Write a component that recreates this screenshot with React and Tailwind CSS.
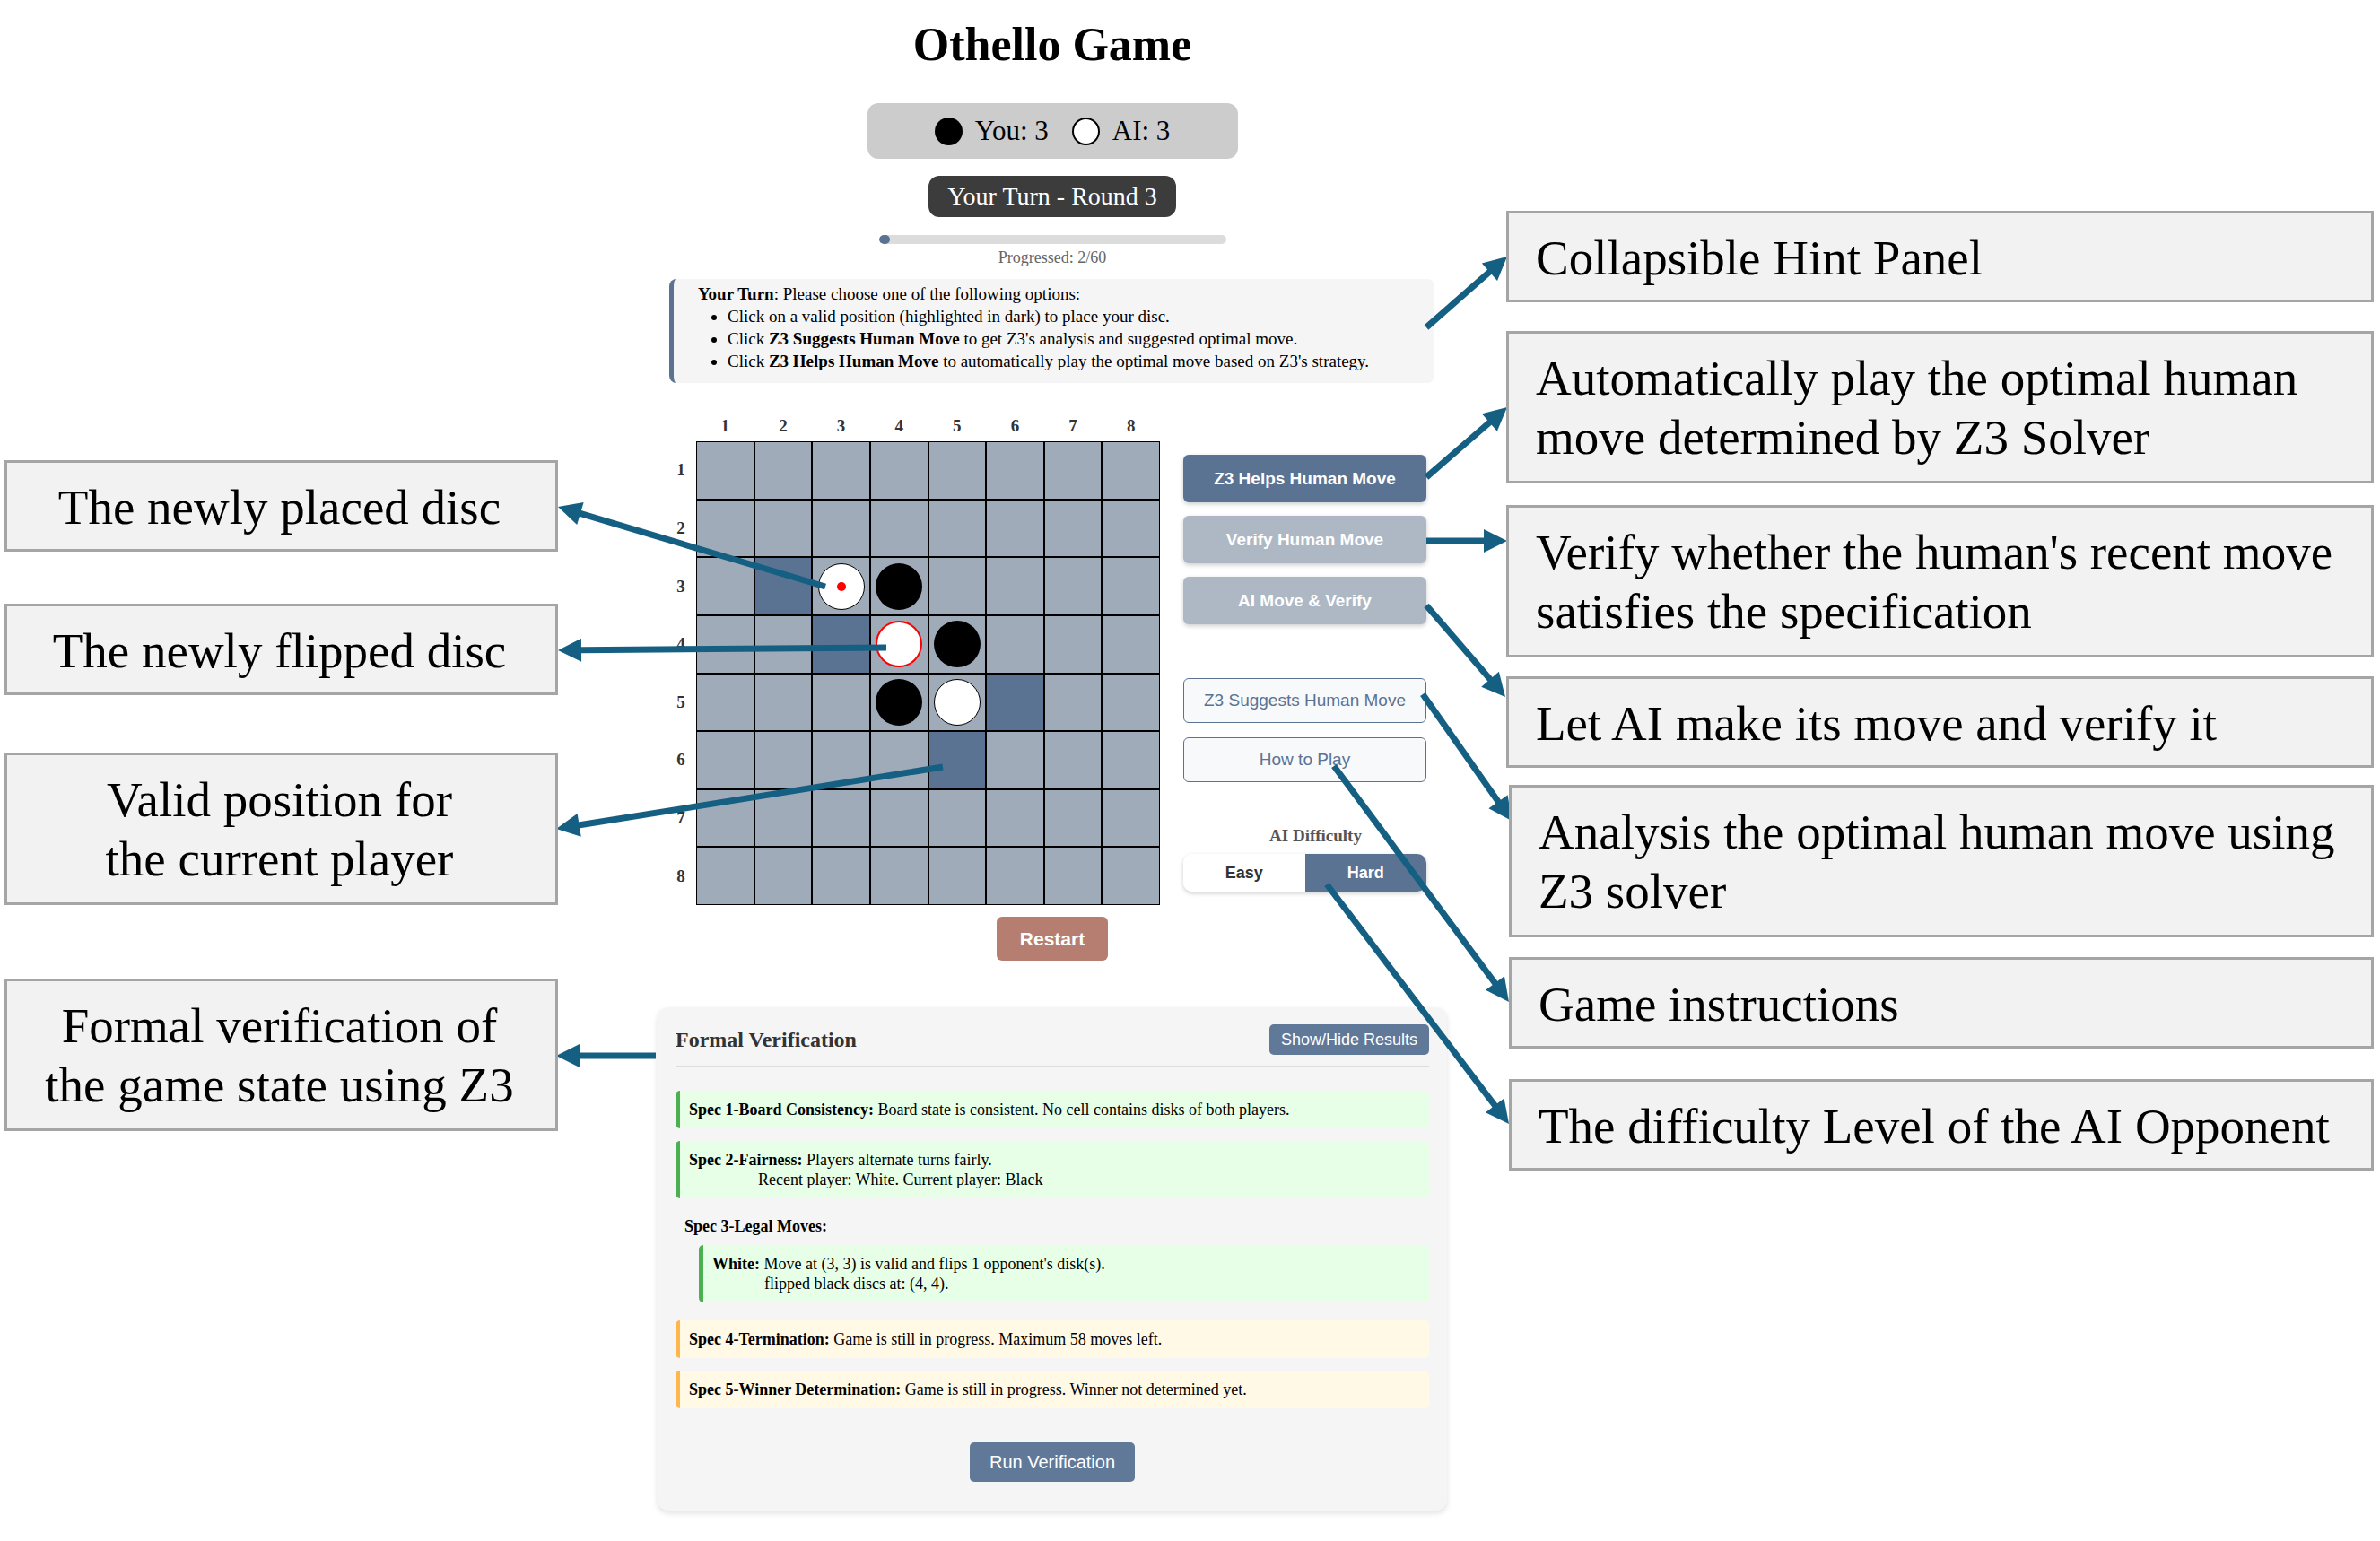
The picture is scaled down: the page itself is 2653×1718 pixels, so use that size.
const SERIF = "font-['Liberation_Serif',serif]";
const SANS = "font-['Liberation_Sans',sans-serif]";

const NUMBERS = [1, 2, 3, 4, 5, 6, 7, 8];

const DISCS = {
  "3-3": "placed",
  "3-4": "black",
  "4-4": "flipped",
  "4-5": "black",
  "5-4": "black",
  "5-5": "white",
};

const VALID = ["3-2", "4-3", "5-6", "6-5"];

const DISC_STYLE = {
  black: "bg-black",
  white: "bg-white border border-black",
  placed: "bg-white border border-black",
  flipped: "bg-white border-2 border-[#ff0000]",
};

const ARROWS = [
  [920, 654, 622, 565],
  [988, 722, 622, 725],
  [1051, 855, 620, 924],
  [731, 1177, 620, 1177],
  [1590, 365, 1680, 286],
  [1590, 532, 1680, 454],
  [1590, 603, 1680, 603],
  [1590, 675, 1678, 777],
  [1586, 774, 1685, 915],
  [1487, 854, 1682, 1117],
  [1479, 986, 1682, 1253],
];

function Arrow({ points }) {
  const [x1, y1, x2, y2] = points;
  const len = Math.hypot(x2 - x1, y2 - y1);
  const ux = (x2 - x1) / len;
  const uy = (y2 - y1) / len;
  const bx = x2 - ux * 26;
  const by = y2 - uy * 26;
  const head = [
    [x2, y2],
    [bx - uy * 13, by + ux * 13],
    [bx + uy * 13, by - ux * 13],
  ]
    .map((p) => p.join(","))
    .join(" ");
  return (
    <g>
      <line x1={x1} y1={y1} x2={bx + ux} y2={by + uy} stroke="#156082" strokeWidth="7" />
      <polygon points={head} fill="#156082" />
    </g>
  );
}

function Callout({ children, lines = 1, align = "left", className = "" }) {
  return (
    <div
      className={`relative z-10 border-3 border-[#a5a5a5] bg-[#f2f2f2] text-[55px] leading-[66px] text-black ${
        lines === 1 ? "pt-[17px] pb-[13px]" : "pt-[17px] pb-[15px]"
      } ${align === "center" ? "pr-1 text-center" : "pl-[30px]"} ${className}`}
    >
      {children}
    </div>
  );
}

function Cell({ row, col }) {
  const key = `${row}-${col}`;
  const disc = DISCS[key];
  return (
    <button
      type="button"
      aria-label={`Row ${row}, column ${col}`}
      className={`flex items-center justify-center ${VALID.includes(key) ? "bg-[#5b7393]" : "bg-[#a0abba]"}`}
    >
      {disc && (
        <span className={`flex size-[52px] items-center justify-center rounded-full ${DISC_STYLE[disc]}`}>
          {disc === "placed" && <span className="size-[10px] rounded-full bg-[#ff0000]" />}
        </span>
      )}
    </button>
  );
}

function Board() {
  return (
    <div className="grid flex-1 grid-cols-[34px_1fr]">
      <div className="col-start-2 mb-[5px] grid grid-cols-8 text-center text-[19px] leading-6 font-bold text-[#333333]">
        {NUMBERS.map((n) => (
          <span key={n}>{n}</span>
        ))}
      </div>
      <div className="grid grid-rows-8 items-center text-center text-[19px] leading-6 font-bold text-[#333333]">
        {NUMBERS.map((n) => (
          <span key={n}>{n}</span>
        ))}
      </div>
      <div className="grid aspect-square grid-cols-8 grid-rows-8 gap-[2px] bg-black p-px">
        {NUMBERS.map((row) => NUMBERS.map((col) => <Cell key={`${row}-${col}`} row={row} col={col} />))}
      </div>
    </div>
  );
}

function Controls() {
  const solid = "h-[53px] rounded-md pt-[2px] text-[19px] font-bold text-white shadow-[0_2px_5px_rgba(0,0,0,0.2)]";
  const outline = "h-[50px] rounded-md border border-[#5b7393] bg-[#f8f9fb] pt-px text-[19px] text-[#5b7393]";
  return (
    <div className={`flex w-[271px] flex-col pt-11 ${SANS}`}>
      <div className="flex flex-col gap-[15px]">
        <button type="button" className={`${solid} bg-[#5b7393]`}>Z3 Helps Human Move</button>
        <button type="button" className={`${solid} bg-[#aeb8c5]`}>Verify Human Move</button>
        <button type="button" className={`${solid} bg-[#aeb8c5]`}>AI Move &amp; Verify</button>
      </div>
      <div className="mt-[60px] flex flex-col gap-4">
        <button type="button" className={outline}>Z3 Suggests Human Move</button>
        <button type="button" className={outline}>How to Play</button>
      </div>
      <div className="mt-12">
        <div id="difficulty" className={`pl-6 text-center text-[19px] leading-6 font-bold text-[#555555] ${SERIF}`}>
          AI Difficulty
        </div>
        <div
          role="group"
          aria-labelledby="difficulty"
          className="mt-2 grid h-[42px] grid-cols-2 overflow-hidden rounded-[10px] text-[18px] font-bold shadow-[0_2px_5px_rgba(0,0,0,0.2)]"
        >
          <button type="button" aria-pressed="false" className="bg-white text-[#333333]">Easy</button>
          <button type="button" aria-pressed="true" className="bg-[#5b7393] text-white">Hard</button>
        </div>
      </div>
    </div>
  );
}

function Spec({ tone, title, children, className = "" }) {
  const colors = tone === "ok" ? "border-[#4caf50] bg-[#e6ffe6]" : "border-[#ffb74d] bg-[#fff9e6]";
  return (
    <div className={`rounded-[5px] border-l-5 py-[10px] pl-[10px] ${colors} ${className}`}>
      <strong>{title}</strong> {children}
    </div>
  );
}

function Verification() {
  return (
    <section className="mt-[52px] rounded-xl bg-[#f5f5f5] px-5 pt-[19px] pb-8 shadow-[0_3px_6px_rgba(0,0,0,0.12)]">
      <div className="flex items-center justify-between border-b-2 border-[#dddddd] pb-3">
        <h2 className="text-2xl font-bold text-[#333333]">Formal Verification</h2>
        <button type="button" className={`h-[34px] rounded-[5px] bg-[#617999] px-[13px] text-lg leading-6 text-white ${SANS}`}>
          Show/Hide Results
        </button>
      </div>
      <div className="mt-[26px] text-[18px] leading-[22px]">
        <Spec tone="ok" title="Spec 1-Board Consistency:">
          Board state is consistent. No cell contains disks of both players.
        </Spec>
        <Spec tone="ok" title="Spec 2-Fairness:" className="mt-[14px]">
          Players alternate turns fairly.
          <div className="pl-[77px]">Recent player: White. Current player: Black</div>
        </Spec>
        <div className="mt-5 mb-[10px] pl-[10px] font-bold">Spec 3-Legal Moves:</div>
        <Spec tone="ok" title="White:" className="ml-[26px]">
          Move at (3, 3) is valid and flips 1 opponent's disk(s).
          <div className="pl-[58px]">flipped black discs at: (4, 4).</div>
        </Spec>
        <Spec tone="wait" title="Spec 4-Termination:" className="mt-5">
          Game is still in progress. Maximum 58 moves left.
        </Spec>
        <Spec tone="wait" title="Spec 5-Winner Determination:" className="mt-[14px]">
          Game is still in progress. Winner not determined yet.
        </Spec>
      </div>
      <div className="mt-[38px] text-center">
        <button type="button" className={`h-11 rounded-[5px] bg-[#617999] px-[22px] text-xl text-white ${SANS}`}>
          Run Verification
        </button>
      </div>
    </section>
  );
}

function Game() {
  return (
    <main className="flex flex-col pt-5 pr-[66px] pl-[111px] text-black">
      <h1 className="text-center text-[52px] leading-[60px] font-bold">Othello Game</h1>
      <div className="mt-[35px] flex h-[62px] w-[413px] items-center justify-center self-center rounded-xl bg-[#cccccc] text-[31px]">
        <span className="mr-[14px] size-[31px] rounded-full bg-black" />
        <span>You: 3</span>
        <span className="mr-[14px] ml-[26px] size-[31px] rounded-full border-2 border-black bg-white" />
        <span>AI: 3</span>
      </div>
      <div className="mt-[19px] flex h-[46px] items-center self-center rounded-xl bg-[#3c3c3c] px-[21px] text-[28px] text-white">
        Your Turn - Round 3
      </div>
      <div
        role="progressbar"
        aria-label="Progress"
        aria-valuenow={2}
        aria-valuemax={60}
        className="mt-5 h-[10px] w-[387px] self-center overflow-hidden rounded-full bg-[#dcdcdc]"
      >
        <div className="h-full rounded-full bg-[#5b7393]" style={{ width: `${(2 / 60) * 100}%` }} />
      </div>
      <div className="mt-[3px] text-center text-[18px] leading-6 text-[#666666]">Progressed: 2/60</div>
      <div className="mt-3 mr-[14px] ml-[13px] rounded-lg border-l-5 border-[#5b7393] bg-[#f5f5f5] pt-1 pb-3 pl-[27px] text-[19px] leading-[25px]">
        <p>
          <strong>Your Turn</strong>: Please choose one of the following options:
        </p>
        <ul className="list-disc pl-[33px]">
          <li>Click on a valid position (highlighted in dark) to place your disc.</li>
          <li>
            Click <strong>Z3 Suggests Human Move</strong> to get Z3's analysis and suggested optimal move.
          </li>
          <li>
            Click <strong>Z3 Helps Human Move</strong> to automatically play the optimal move based on Z3's strategy.
          </li>
        </ul>
      </div>
      <div className="mt-9 flex gap-[26px] pr-[23px] pl-[9px]">
        <Board />
        <Controls />
      </div>
      <button
        type="button"
        className={`mt-[13px] h-[49px] self-center rounded-md bg-[#b67e70] px-[26px] text-[21px] font-bold text-white ${SANS}`}
      >
        Restart
      </button>
      <Verification />
    </main>
  );
}

export default function App() {
  return (
    <div
      className={`relative grid min-h-screen grid-cols-[617fr_1057fr_967fr] items-start bg-white pr-[7px] pl-[5px] ${SERIF}`}
    >
      <aside className="pt-[513px]">
        <Callout align="center">The newly placed disc</Callout>
        <Callout align="center" className="mt-[58px]">The newly flipped disc</Callout>
        <Callout align="center" lines={2} className="mt-16">
          Valid position for
          <br />
          the current player
        </Callout>
        <Callout align="center" lines={2} className="mt-[82px]">
          Formal verification of
          <br />
          the game state using Z3
        </Callout>
      </aside>
      <Game />
      <aside className="pt-[235px]">
        <Callout>Collapsible Hint Panel</Callout>
        <Callout lines={2} className="mt-8">
          Automatically play the optimal human
          <br />
          move determined by Z3 Solver
        </Callout>
        <Callout lines={2} className="mt-6">
          Verify whether the human's recent move
          <br />
          satisfies the specification
        </Callout>
        <Callout className="mt-[21px]">Let AI make its move and verify it</Callout>
        <Callout lines={2} className="mt-[19px] ml-[3px]">
          Analysis the optimal human move using
          <br />
          Z3 solver
        </Callout>
        <Callout className="mt-[22px] ml-[3px]">Game instructions</Callout>
        <Callout className="mt-[34px] ml-[3px]">The difficulty Level of the AI Opponent</Callout>
      </aside>
      <svg
        className="pointer-events-none absolute inset-0 h-full w-full"
        viewBox="0 0 2653 1718"
        preserveAspectRatio="none"
        aria-hidden="true"
      >
        {ARROWS.map((points) => (
          <Arrow key={points.join()} points={points} />
        ))}
      </svg>
    </div>
  );
}
